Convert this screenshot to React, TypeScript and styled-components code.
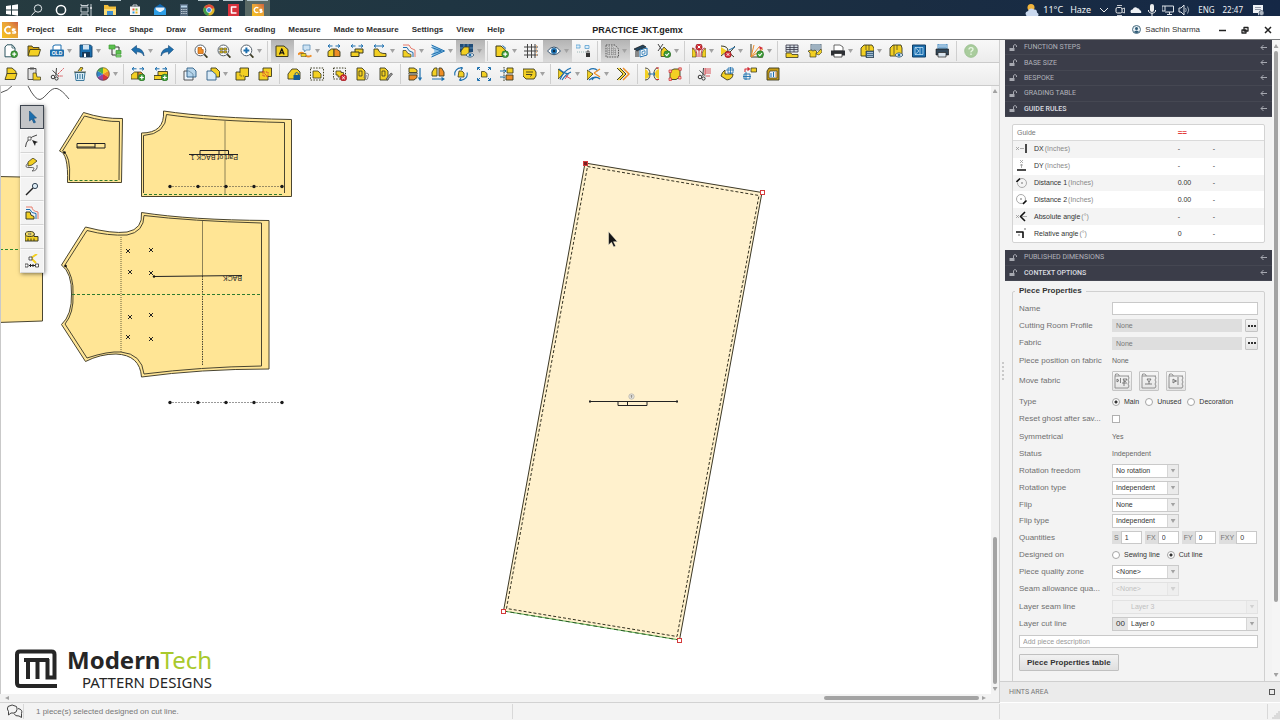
import React, { ReactNode } from "react";
import styled, { createGlobalStyle, css } from "styled-components";

const Y = "#f3d023";
const K = "#3b3a22";
const B = "#1c6fae";
const L = "#8cc0e4";
const O = "#ee8d25";
const R = "#d12c35";
const G = "#3f9c38";
const sans = `"Liberation Sans", Arial, sans-serif`;

const GlobalStyle = createGlobalStyle`
  * { box-sizing: border-box; }
  html, body, #root { height: 100%; }
  body { margin: 0; overflow: hidden; background: #f3f3f3; font: 8px/10px ${sans}; color: #333; }
  button, input, select { font: inherit; color: inherit; margin: 0; }
`;

/* ---------- icons ---------- */

const Svg = ({ children, size = 14, box = 14 }: { children: ReactNode; size?: number; box?: number }) => (
  <svg width={size} height={size} viewBox={`0 0 ${box} ${box}`} fill="none" strokeLinejoin="round" aria-hidden="true">
    {children}
  </svg>
);

const Plus = ({ x = 10.2, y = 10.2 }) => (
  <>
    <circle cx={x} cy={y} r="3.4" fill={G} stroke="#256b25" strokeWidth=".6" />
    <path d={`M${x - 2} ${y}h4M${x} ${y - 2}v4`} stroke="#fff" strokeWidth="1.2" />
  </>
);
const Check = ({ x = 10.2, y = 10.2 }) => (
  <>
    <circle cx={x} cy={y} r="3.4" fill={G} stroke="#256b25" strokeWidth=".6" />
    <path d={`M${x - 1.8} ${y}l1.4 1.4 2.2-2.6`} stroke="#fff" strokeWidth="1.1" />
  </>
);
const Cross = ({ x = 10.2, y = 10.2 }) => (
  <>
    <circle cx={x} cy={y} r="3.2" fill={R} stroke="#8f1a20" strokeWidth=".6" />
    <path d={`M${x - 1.3} ${y - 1.3}l2.6 2.6M${x + 1.3} ${y - 1.3}l-2.6 2.6`} stroke="#fff" strokeWidth="1" />
  </>
);
const Spread = ({ y = 2 }) => (
  <path d={`M1 ${y}h4.5M8.5 ${y}h4.5M3 ${y - 1.6}L1 ${y}l2 1.6M11 ${y - 1.6}l2 1.6-2 1.6`} stroke={B} strokeWidth="1" />
);
const Lens = ({ children }: { children: ReactNode }) => (
  <>
    <path d="M10 10l3.4 3.6" stroke={K} strokeWidth="1.8" />
    <circle cx="6.4" cy="6.4" r="5.4" fill="#fff" stroke="#55606a" strokeWidth="1" />
    {children}
  </>
);
const Eye = ({ x = 10, y = 11 }) => (
  <>
    <path d={`M${x - 4} ${y}q4-4.4 8 0q-4 4.4-8 0z`} fill="#fff" stroke="#1f4b70" strokeWidth=".8" />
    <circle cx={x} cy={y} r="1.5" fill={B} />
  </>
);
const Scissors = () => (
  <>
    <path d="M6.5 1l-.7 8M2.5 3.5l6 5.500" stroke="#444" strokeWidth="1" />
    <circle cx="3" cy="10" r="1.8" stroke="#333" strokeWidth="1" />
    <circle cx="6.500" cy="11.500" r="1.600" stroke="#333" strokeWidth="1" />
  </>
);

const icons: Record<string, ReactNode> = {
  new: <><path d="M3 .8h5.200L11 4v8.800H1V3z" fill="#fff" stroke="#2c5560" /><path d="M8 1v3h3" stroke="#2c5560" strokeWidth=".8" /><Plus /></>,
  open: <><path d="M1 11.500V2h4l1 1.500h6v2" fill="#d9a80f" stroke={K} strokeWidth=".9" /><path d="M3 5.500h10.500l-2 6.500H1z" fill={Y} stroke={K} strokeWidth=".9" /></>,
  old: <><path d="M3 6V2l2-1h6v5" fill="#fff" stroke={B} /><rect x="0" y="5.500" width="14" height="7" rx="1" fill={B} /><text x="7" y="11" textAnchor="middle" fontSize="5" fontWeight="700" fill="#fff" fontFamily="Liberation Sans">OLD</text></>,
  save: <><path d="M1 1h10.500L13 2.500V13H1z" fill={B} stroke="#123f66" strokeWidth=".9" /><path d="M4 1h6v4.500H4z" fill="#cfe3f2" /><path d="M3 8h8v5H3z" fill="#15395a" /><path d="M5 9.500h2V13H5z" fill="#fff" /></>,
  tree: <><path d="M4 5v6h5M7 3h4v4" stroke="#333" /><path d="M1 1h6v4H1zM8 6.500h5v3.500H8z" fill="#5cc04f" stroke={G} strokeWidth=".7" /><path d="M8 11h5v2H8z" fill="#8fdc84" stroke={G} strokeWidth=".7" /></>,
  undo: <path d="M.5 5.500L5.500 1.500v2.600q7 .4 7.500 7.900q-2-4.300-7.500-4.200v2.400z" fill={B} stroke="#164a78" strokeWidth=".6" />,
  redo: <path d="M13.500 5.500L8.500 1.500v2.600q-7 .4-7.500 7.900q2-4.300 7.500-4.200v2.400z" fill={B} stroke="#164a78" strokeWidth=".6" />,
  zoomPiece: <Lens><path d="M4 3.500h3.500v2h1.700v4H4z" fill={O} stroke="#b25a10" strokeWidth=".7" /></Lens>,
  zoomAll: <Lens><path d="M2.800 4h3v2h-3zM6.800 4h3v2h-3zM2.800 7h3v2h-3zM6.800 7h3v2h-3z" fill={Y} stroke={K} strokeWidth=".6" /></Lens>,
  zoomIn: <Lens><path d="M3.500 6.400h5.800M6.400 3.500v5.800" stroke={B} strokeWidth="2" /></Lens>,
  label: <><path d="M1 2h8l4 3.500V12.500H1z" fill={Y} stroke={K} /><path d="M4.500 10.500L6.800 4.700l2.300 5.800M5.300 8.800h3" stroke="#111" strokeWidth="1.200" /></>,
  note: <><path d="M5 1h7v5H8L6.500 8V6H5z" fill="#cde3f4" stroke="#5d8fb8" strokeWidth=".8" /><path d="M0 10.500q4-3.500 6.500 0t7 1" stroke={O} strokeWidth="2" /><path d="M3 9.500h5v3H3z" fill={Y} stroke={K} strokeWidth=".5" /></>,
  dartPair: <><Spread /><path d="M1 12.500V7.500l3.500-2.500H7v7.500z" fill={Y} stroke={K} strokeWidth=".9" /><path d="M7 12.500V5h2.500L13 7.500v5z" fill={O} stroke={K} strokeWidth=".9" /></>,
  dupSize: <><Spread /><path d="M5 5h8v4H5z" fill={Y} stroke={K} /><path d="M1 8h8v4.500H1z" fill={Y} stroke={K} /></>,
  cornerSize: <><path d="M1 2h9M3 .5L1 2l2 1.500M9 .5L11 2 9 3.500" stroke={B} /><path d="M1 5h4q1 5 8 4.500v3H1z" fill={Y} stroke={K} strokeWidth=".9" /></>,
  grade: <><path d="M1 1h6q1 4 6 5v7" stroke="#e77a6b" /><path d="M1 3.500h4q1 4 6 5V13" stroke={B} /><path d="M1 6.500h3q1 3.500 5 4V13H1z" fill={Y} stroke={K} strokeWidth=".7" /></>,
  fan: <><path d="M.5 1l13 6L.5 13l3-6z" fill={L} /><path d="M.5 1l13 6L.5 13M.5 3.500l10 3.500-10 3.500" stroke={B} strokeWidth="1" /></>,
  viewPiece: <><path d="M0 0h13v8H0z" fill="#204c77" /><path d="M4 0v8M8 0v8M0 4h13" stroke={L} strokeWidth=".6" /><path d="M1 7l3-4h5v8H1z" fill={Y} stroke={K} strokeWidth=".8" /><Eye /></>,
  addPiece: <><path d="M1 2h5l4.500 4v6.500H1z" fill={Y} stroke={K} /><path d="M7.500 1.500l3.500 3" stroke={B} /><Plus /></>,
  grid: <><path d="M3.500 0v14M7.500 0v14M11 0v14M0 3h14M0 7h14M0 11h14" stroke="#444" strokeWidth="1" /><path d="M12.500 1v12" stroke="#edb27a" strokeWidth=".8" strokeDasharray="2 1" /></>,
  eye: <><path d="M.5 7Q7-1 13.500 7Q7 14.500.500 7z" fill="#fff" stroke="#34516c" /><circle cx="7" cy="7" r="3" fill={B} /><circle cx="7" cy="7" r="1.200" fill="#10283e" /></>,
  link: <><path d="M0 1h4v3H0zM9 1.500h4v3H9z" fill="#dceefa" stroke="#5ca1d0" strokeWidth=".8" /><path d="M1 8h9" stroke="#8aa" strokeWidth=".8" strokeDasharray="1 1" /><path d="M10 9h4v4h-4z" fill="#333" /><path d="M11 9V7h2v2" stroke="#333" strokeWidth=".8" /></>,
  hatch: <><path d="M1 1h9l3.500 4v8H1z" fill="#ccc" stroke="#555" strokeDasharray="1.500 1" /><path d="M2 4h8M2 6h10M2 8h10M2 10h10M4 2v10M7 2v10M10 4v8" stroke="#666" strokeWidth=".7" strokeDasharray="1 1" /></>,
  plotter: <><path d="M0 5l9-4 3 2-9 4z" fill="#24465f" stroke="#111" strokeWidth=".7" /><path d="M2 7v6M4 7v6" stroke="#222" /><path d="M6 6l7-2v7l-7 2z" fill="#fff" stroke={B} /><path d="M8 7.500l3-.8v3l-3 .8z" stroke={B} strokeWidth=".8" /></>,
  cutCheck: <><path d="M1 0l5 8M6 0L1 7" stroke="#444" /><path d="M4 12.500V7l3-4 6 6v3.500z" fill={Y} stroke={K} strokeWidth=".8" /><Check /></>,
  notchDel: <><path d="M0 4q5 0 5 9M13 4q-4 0-4 9M7 6v7" stroke={R} strokeWidth=".9" /><path d="M0 4.500q4 .5 4 8.500H0zM14 4.500q-4 .5-4 8.500h4z" fill={Y} stroke={K} strokeWidth=".6" /><Cross x={7} y={3} /></>,
  lineDel: <><path d="M0 2q7 0 7 5t7-5M0 12l6-5 7 6" stroke={K} strokeWidth="1" /><path d="M0 3l6 4-6 4z" fill={Y} /><path d="M14 3L8 6" stroke={B} /><Cross x={7} y={10.500} /></>,
  growthOk: <><path d="M1 0v13h12" stroke={K} /><path d="M1 13L4 1M1 13l8-10M1 13L13 5" stroke={O} strokeWidth="1" /><path d="M9 2l4 2-3 2" fill={R} /><Check /></>,
  sheet: <><path d="M1 1h12v7H1z" fill="#d5dde3" stroke="#334" strokeWidth=".8" /><path d="M1 3.500h12M1 5.500h12M5 1v7M9 1v7" stroke="#334" strokeWidth=".8" /><path d="M1 9h5l1 1.500h6v3H1z" fill={Y} stroke={K} strokeWidth=".8" /></>,
  shirt: <><path d="M3 0h10v6H3z" fill="#cfe3f2" stroke="#456" strokeWidth=".8" /><path d="M4 2h8M4 4h8" stroke="#456" strokeWidth=".7" /><path d="M0 7l3-1 2 1 2-1 2 2-1 1v4H2V9z" fill={Y} stroke={K} strokeWidth=".7" /><path d="M8 10l5-5 1 3-3 3z" fill={Y} stroke={K} strokeWidth=".6" /></>,
  print: <><path d="M3 1h6l3 2v4H3z" fill="#fff" stroke="#444" strokeWidth=".8" /><path d="M0 6.500h14v5H0z" fill="#2c2f33" /><path d="M3 9.500h8v3.500H3z" fill="#fff" stroke="#333" strokeWidth=".8" /></>,
  boxCalc: <><path d="M1 4l3-3h8l2 3v8H1z" fill={Y} stroke={K} strokeWidth=".9" /><path d="M6 1v5M9 1v5" stroke={K} strokeWidth=".7" /><path d="M6 7h8v6.500H6z" fill="#456c88" stroke="#234" strokeWidth=".7" /><path d="M7 8.500h6M7 10.500h6M7 12.500h6" stroke="#cde" strokeWidth=".7" /></>,
  boxEye: <><path d="M1 4l3-3h8l1 3v8H1z" fill={Y} stroke={K} strokeWidth=".9" /><path d="M5 1v10M8 1v5" stroke={K} strokeWidth=".7" /><Eye /></>,
  screen: <><path d="M.5 1h13v12H.500z" fill={B} stroke="#123f66" /><path d="M3 3.500h8v7H3zM3 3.500l4 3.500-4 3.500M8 3.500v7" stroke="#bfe0f6" strokeWidth=".8" /></>,
  printStack: <><path d="M3 0h9v5H3z" fill="#dcecf8" stroke={B} strokeWidth=".8" /><path d="M4 2h7M4 3.800h7" stroke={B} strokeWidth=".7" /><path d="M1 5h12.500v6H1z" fill="#33485a" stroke="#111" strokeWidth=".6" /><path d="M3 8.500h8v4.500H3z" fill="#d8e4ee" stroke="#222" strokeWidth=".7" /></>,
  help: <><circle cx="7" cy="7" r="6.400" fill="#a9cc9d" stroke="#8fb883" strokeWidth=".6" /><path d="M5 5.600q0-2 2-2t2 1.700q0 1-1.100 1.500T7 8.300M7 9.600v1.300" stroke="#e9f7e4" strokeWidth="1.300" /></>,

  pieceOpen: <><path d="M3 1h5l4 3.500v3H3z" fill={Y} stroke={K} strokeWidth=".9" /><path d="M1 12.500l2-6h10l-2 6z" fill={Y} stroke={K} strokeWidth=".9" /></>,
  paste: <><path d="M1 1.500h8v11H1z" fill="#e2e2e2" stroke="#444" strokeWidth=".9" /><path d="M3 .5h4v2H3z" fill="#555" /><path d="M6 6h3l1 4h3.500v3H6z" fill={Y} stroke={K} strokeWidth=".7" /></>,
  cut: <><Scissors /><path d="M8 7l6-6M8 9h5" stroke={R} strokeWidth=".9" strokeDasharray="1.500 .7" /></>,
  trash: <><path d="M2 5.500h10l-1 8H3z" fill="#d5e9f5" stroke="#2f6f94" strokeWidth=".9" /><path d="M4.500 7v5M7 7v5M9.500 7v5" stroke="#2f6f94" strokeWidth=".9" /><path d="M1 5h12M5 4l3-4 2 1-2 3" fill={Y} stroke={K} strokeWidth=".8" /></>,
  wheel: <><path d="M7 7V.500A6.500 6.500 0 0 1 12.600 3.700z" fill="#f6d51f" /><path d="M7 7l5.600-3.300a6.500 6.500 0 0 1 0 6.600z" fill={O} /><path d="M7 7l5.600 3.300A6.500 6.500 0 0 1 7 13.500z" fill="#d8343a" /><path d="M7 7v6.500a6.500 6.500 0 0 1-5.600-3.200z" fill="#9046a5" /><path d="M7 7l-5.600 3.300a6.500 6.500 0 0 1 0-6.600z" fill="#2d85c8" /><path d="M7 7L1.400 3.700A6.500 6.500 0 0 1 7 .500z" fill="#4fb04a" /><circle cx="7" cy="7" r="6.300" stroke="#444" strokeWidth=".6" /></>,
  dartAdd: <><Spread y={1.800} /><path d="M0 12V8l3.500-3H7v7z" fill={Y} stroke={K} strokeWidth=".8" /><path d="M7 12V5l3 0 3 3v4z" fill={O} stroke={K} strokeWidth=".8" /><Plus x={10.800} y={10.500} /></>,
  dupAdd: <><Spread y={1.800} /><path d="M4 4.500h9.500v5H4z" fill={Y} stroke={K} strokeWidth=".9" /><path d="M0 8.500h8v4H0z" fill={Y} stroke={K} strokeWidth=".9" /><Plus x={10.800} y={10.500} /></>,
  union: <><path d="M1 4h5l4 3v6H1z" fill="#eaf3fb" stroke="#444" strokeWidth=".9" /><path d="M4 1h6l3 3v6H4z" fill={L} fillOpacity=".6" stroke="#2d5d86" strokeWidth=".9" /></>,
  subtract: <><path d="M5 1h5l3.500 3.500V10H5z" fill={Y} stroke={K} strokeWidth=".9" /><path d="M1 4h5l4 3.500V13H1z" fill="#d9eaf7" stroke="#2d5d86" strokeWidth=".9" /></>,
  merge: <><path d="M5 1h8.500v8.500H10V13H1V5h4z" fill={Y} stroke={K} strokeWidth=".9" /><path d="M5 5v4h5" stroke={K} strokeWidth=".8" strokeDasharray="1.300 1" /></>,
  mergeRed: <><path d="M5 1h8.500v8.500H10V13H1V5h4z" fill={Y} stroke={K} strokeWidth=".9" /><path d="M4 4l6 6M5 9V5h5v4z" stroke={R} strokeWidth=".9" strokeDasharray="1.300 1" /></>,
  lockPiece: <><path d="M1 7l4-5h5l3 3v7H1z" fill={Y} stroke={K} strokeWidth=".9" /><path d="M6.500 8h6.500v5H6.500z" fill="#175a92" /><path d="M8 8V6.500q1.700-2 3.400 0V8" stroke="#175a92" strokeWidth="1" /></>,
  selPiece: <><path d="M.5 1h13v12H.500z" stroke={K} strokeDasharray="1.500 1.300" /><path d="M3 4h5l3 3v4H3z" fill={Y} stroke={K} strokeWidth=".8" /></>,
  selDel: <><path d="M.5 1h12v11H.500z" stroke={K} strokeDasharray="1.500 1.300" /><path d="M3 4h5v1.500h2.500V10H5V8H3z" fill={Y} stroke={K} strokeWidth=".8" /><Cross x={10.500} y={10.800} /></>,
  clip: <><path d="M1 1h5l3 3v9H1z" fill={Y} stroke={K} strokeWidth=".9" /><path d="M3 4h3v5H3z" stroke={K} strokeWidth=".8" /><path d="M8 11l1-4q2-2 3.500 0l-1 5q-1.500 1.500-2 0l.8-4" stroke="#777" strokeWidth=".9" /></>,
  clipEdit: <><path d="M1 1h5l3 3v9H1z" fill={Y} stroke={K} strokeWidth=".9" /><path d="M3 4h3v5H3z" stroke={K} strokeWidth=".8" /><path d="M7 12l5-6 1.500 1-5 6z" fill="#999" stroke="#444" strokeWidth=".7" /></>,
  flipV: <><path d="M1 1h5l3 2v2.500H1z" fill={Y} stroke={K} strokeWidth=".9" /><path d="M1 8h8v2.500L6 13H1z" fill={O} stroke={K} strokeWidth=".9" /><path d="M0 6.800h10" stroke={K} strokeWidth=".8" /><path d="M12 1v11M10.500 10.500L12 13l1.500-2.500" stroke={B} strokeWidth="1.200" /></>,
  flipH: <><path d="M1 9V5l2.500-4H6v8z" fill={Y} stroke={K} strokeWidth=".9" /><path d="M8 9V1h2.500L13 5v4z" fill={O} stroke={K} strokeWidth=".9" /><path d="M1 12h11M10.500 10.500L13 12l-2.500 1.500" stroke={B} strokeWidth="1.200" /></>,
  rotate: <><path d="M5 4h3l2 2v4H4z" fill={Y} stroke={K} strokeWidth=".8" /><path d="M1 8.500A6 6 0 0 1 8 1M13 5.500A6 6 0 0 1 6 13M6.500 0L8.500 1 7 2.800M7.500 14L5.500 13 7 11.200" stroke={B} strokeWidth="1.100" /></>,
  scale: <><path d="M4.500 4.500h3l2.500 2v3.500H4.500z" fill={Y} stroke={K} strokeWidth=".8" /><path d="M3 3L.800.800M11 3l2.200-2.200M3 11L.800 13.200M11 11l2.200 2.200M.500 3V.500H3M11 .500h2.500V3M.500 11v2.500H3M11 13.500h2.500V11" stroke={B} /></>,
  align: <><path d="M7 1h6v5H7z" fill={Y} stroke={K} strokeWidth=".9" /><path d="M6 8h7v5H6z" fill={O} stroke={K} strokeWidth=".9" /><path d="M4 0v14" stroke={K} strokeDasharray="1.500 1" /><path d="M0 4h6M4.500 2.500L6 4 4.500 5.500M0 10h5" stroke={B} /></>,
  tag: <><path d="M0 2h11l2 3v4l-2 3H3L0 9z" fill={Y} stroke={K} strokeWidth=".9" /><path d="M3 5h7M3 7.500h6l-1.500 2" stroke={K} strokeWidth=".9" /></>,
  seamA: <><path d="M0 2l6 4.500L0 12z" fill={Y} stroke={K} strokeWidth=".8" /><path d="M2 12.500Q6 3 13 1M4 13Q8 7 13 5M1 2q4 4 10 5" stroke={B} strokeWidth="1.200" /><path d="M8 9l5 3M10 8l-3 4" stroke={R} strokeWidth=".8" /></>,
  seamB: <><path d="M0 3l6 4-6 6z" fill={Y} stroke={K} strokeWidth=".8" /><path d="M2 3q5-3 9 1M2 13Q8 8 13 12M5 13q2-4 7-2" stroke={B} strokeWidth="1.200" /><path d="M7 6l6-4M7 6l6 4" stroke={O} strokeWidth="1.200" /></>,
  chevrons: <><path d="M1 1l6 6-6 6M4 1l6 6-6 6" stroke={K} strokeWidth="1" /><path d="M7 1l6 6-6 6" stroke={O} strokeWidth="1.500" /><path d="M2.500 1l6 6-6 6" stroke={Y} strokeWidth="1.200" /></>,
  swap: <><path d="M0 2q3 1 4 5t-4 5z" fill={Y} /><path d="M14 2q-4 1-4 5t4 5z" fill={Y} /><path d="M0 1q5 0 5 6t-5 6M13 1Q9 1 9 7t4 6" stroke={K} strokeWidth=".9" /><path d="M3 7h7M8.500 5.500L10 7 8.500 8.500" stroke={B} /><path d="M11 1h3M11 12.500h3" stroke={R} /></>,
  nodes: <><path d="M2 4l4-2 6 0 0 8-4 2.500H2z" fill={Y} stroke={K} strokeWidth=".9" /><path d="M1 3h2.500v2.500H1zM10.800.800h2.500v2.500h-2.500zM1 11h2.500v2.500H1zM10.500 9.500H13V12h-2.500z" fill="#f3c0b0" stroke={R} strokeWidth=".7" /></>,
  cutSeam: <><Scissors /><path d="M8 2h6M8 4h6M8 6h6M9 9h4M8 1v7" stroke={R} strokeWidth=".8" /></>,
  hand: <><path d="M1 9q1-4 4-6v4h8q0 5-6 6z" fill={Y} stroke={K} strokeWidth=".9" /><path d="M8 1h5v5H8zM6 3h8M10.500 0v7" stroke={B} strokeWidth=".8" /></>,
  transfer: <><path d="M8 1h5.500v4H8z" fill={Y} stroke={K} strokeWidth=".8" /><path d="M1 7h6v5H1zM3 5v8M0 9.500h8" stroke={B} strokeWidth=".9" /><path d="M2 5V2h4M4.500.500L6.500 2 4.500 3.500" stroke={R} strokeWidth="1.100" /></>,
  page: <><path d="M3 1h10v12H1V4z" fill="#c79b12" stroke={K} strokeWidth=".9" /><path d="M4 4h7v7H3V6z" fill="#e9f2f8" stroke={K} strokeWidth=".7" /><path d="M5 6v4M7.500 5v5" stroke={B} /><path d="M10 5v5" stroke={O} /></>,
};

const paletteIcons: { name: string; art: ReactNode }[] = [
  { name: "Select", art: <path d="M4.500 1l7 7-3 .3 2 4-1.700.7-1.800-4L4.500 11z" fill={B} stroke="#144a78" strokeWidth=".6" /> },
  { name: "Edit point", art: <><path d="M.5 13Q1 4 12 1" stroke="#444" /><path d="M3 3h3v3H3z" fill="#fff" stroke="#444" strokeWidth=".8" /><path d="M7 6l6 2-2.300 1L10 12z" fill="#222" /></> },
  { name: "Draw", art: <><path d="M3 4l5-4 4 3-5 4-4 1z" fill={Y} stroke={K} strokeWidth=".8" /><path d="M3 5Q-2 10 5 9.500T7 13q6 0 5-6" stroke="#666" /></> },
  { name: "Pin", art: <><circle cx="10" cy="4" r="2.600" fill="#dcebf4" stroke="#345" /><path d="M8 6L1 13" stroke="#222" strokeWidth="1.400" /></> },
  { name: "Seam", art: <><path d="M1 1h6q0 4 6 5v7" stroke="#e77a6b" /><path d="M1 3.500h4q1 4 6 4V13" stroke={B} /><path d="M1 6h4q0 4 4 4.500V13H1z" fill={Y} stroke={K} /></> },
  { name: "Measure", art: <><path d="M0 4v7h13V6.500H9V4z" fill={Y} stroke={K} /><ellipse cx="4.800" cy="4" rx="4.500" ry="2.500" fill="#f7e06a" stroke={K} /><ellipse cx="4.800" cy="4" rx="1.500" ry=".8" fill="#fff" stroke={K} strokeWidth=".6" /><path d="M3 11V8.500M6 11V8.500M9 11V8.500" stroke={K} /></> },
  { name: "Assemble", art: <><path d="M12 0L6 4l5 5" stroke={Y} strokeWidth="2" /><path d="M4 3h3v3H4zM0 10h3v3H0zM10.500 10h3v3h-3z" fill="#fff" stroke="#333" strokeWidth=".8" /><path d="M4 11.500h6M5.500 10v3M8 10v3" stroke="#222" /></> },
];

/* ---------- shell ---------- */

const Shell = styled.div`
  display: flex;
  flex-direction: column;
  height: 100vh;
`;

const Taskbar = styled.header`
  display: flex;
  justify-content: space-between;
  flex: none;
  height: 16px;
  overflow: hidden;
  padding-right: 16px;
  color: #eef2f5;
  background: linear-gradient(90deg, #263b40, #1f3542 35%, #1a2d42 70%, #152846);
`;

const TaskApps = styled.div`
  display: grid;
  grid-template-columns: repeat(11, 1fr);
  width: 270px;
`;

const TaskApp = styled.button<{ $open?: boolean; $active?: boolean }>`
  display: flex;
  justify-content: center;
  padding: 3px 0 0;
  border: 0;
  border-top: 1px solid transparent;
  background: ${(p) => (p.$active ? "#5a6a66" : "transparent")};
  ${(p) => p.$open && css`border-image: linear-gradient(90deg, transparent 12%, #b8cbd2 12% 88%, transparent 88%) 1;`}
`;

const Tray = styled.div`
  display: flex;
  align-items: flex-start;
  gap: 4px;
  padding-top: 4px;
  font: 8px/12px "Noto Sans", "Open Sans", sans-serif;
`;

const Weather = styled.span`
  display: flex;
  gap: 7px;
  margin-right: 3px;
  font-size: 9px;
`;

const Language = styled.span`
  margin-left: 4px;
`;

const Clock = styled.time`
  margin: 0 5px 0 4px;
`;

const MenuBar = styled.nav`
  display: grid;
  grid-template-columns: 1fr auto 1fr;
  align-items: center;
  flex: none;
  height: 24px;
  padding: 4px 7px 0 2px;
  background: #fff;
  border-bottom: 1px solid #77797b;
`;

const Menus = styled.div`
  display: flex;
  align-items: center;
  gap: 13px;
  font-weight: 700;

  svg { margin-right: -4px; }
`;

const MenuItem = styled.button`
  border: 0;
  padding: 0;
  background: none;
  color: #2e2e2e;
  white-space: nowrap;
`;

const Title = styled.h1`
  margin: 0;
  font-size: 9px;
  color: #222;
`;

const WindowArea = styled.div`
  display: flex;
  justify-content: flex-end;
  align-items: center;
  gap: 13px;
`;

const User = styled.span`
  display: flex;
  align-items: center;
  gap: 4px;
  margin-right: 4px;
`;

const WindowButton = styled.button`
  display: flex;
  padding: 0;
  border: 0;
  background: none;
`;

const Main = styled.div`
  display: flex;
  flex: 1;
  min-height: 0;
`;

const Workspace = styled.main`
  display: flex;
  flex-direction: column;
  flex: 1;
  min-width: 0;
  border-right: 1px solid #cfcfcf;
`;

/* ---------- toolbars ---------- */

const ToolRow = styled.div`
  display: flex;
  flex: none;
  height: 23px;
  overflow: hidden;
  background: linear-gradient(#f8f8f8, #ececec);
  border-bottom: 1px solid #cbcbcb;
`;

const ToolButton = styled.button<{ $menu?: boolean; $active?: boolean }>`
  display: flex;
  align-items: center;
  flex: none;
  width: ${(p) => (p.$menu ? 29 : 23)}px;
  gap: 3px;
  padding: 0 0 0 4px;
  border: 0;
  background: ${(p) => (p.$active ? "linear-gradient(#b4b4b4, #dadada)" : "none")};
`;

const Caret = styled.span<{ $dir?: "up" | "down" | "left" | "right" }>`
  flex: none;
  width: 5px;
  height: 4px;
  background: #a2a2a2;
  clip-path: ${(p) =>
    ({
      down: "polygon(0 0, 100% 0, 50% 100%)",
      up: "polygon(50% 0, 100% 100%, 0 100%)",
      left: "polygon(100% 0, 100% 100%, 20% 50%)",
      right: "polygon(0 0, 80% 50%, 0 100%)",
    })[p.$dir ?? "down"]};
`;

const Divider = styled.span`
  flex: none;
  width: 1px;
  margin: 1px 3px 1px 2px;
  background: #cfcfcf;
`;

/* name, "+" for a menu arrow, "*" for pressed, "|" for a divider, "_" for spare room */
const rowOne =
  "new open old+ save+ tree undo+ redo _ | zoomPiece zoomAll zoomIn+ | label* note+ dartPair dupSize cornerSize+ grade+ fan+ viewPiece+* | addPiece+ grid eye+* link | hatch+* plotter cutCheck+ | notchDel+ lineDel+ growthOk+ | sheet shirt print+ boxCalc+ boxEye screen printStack | help";
const rowTwo =
  "pieceOpen paste cut trash wheel+ | dartAdd dupAdd | union subtract+ merge mergeRed | lockPiece selPiece selDel clip clipEdit | flipV flipH rotate scale align tag+ | seamA+ seamB+ chevrons | swap nodes | cutSeam hand transfer page";

const Spare = styled.span`
  flex: none;
  width: 5px;
`;

const Tools = ({ spec }: { spec: string }) => (
  <ToolRow role="toolbar">
    {spec.split(" ").map((token, i) => {
      if (token === "|") return <Divider key={i} />;
      if (token === "_") return <Spare key={i} />;
      const name = token.replace(/[+*]/g, "");
      const menu = token.includes("+");
      return (
        <ToolButton key={i} $menu={menu} $active={token.includes("*")} aria-label={name}>
          <Svg>{icons[name]}</Svg>
          {menu && <Caret />}
        </ToolButton>
      );
    })}
  </ToolRow>
);

/* ---------- canvas ---------- */

const CanvasGrid = styled.section`
  display: grid;
  grid-template: minmax(0, 1fr) 8px / minmax(0, 1fr) 8px;
  flex: 1;
  min-height: 0;
  border-bottom: 1px solid #d2d2d2;
`;

const Canvas = styled.div`
  position: relative;
  overflow: hidden;
  background: #fff;
  border-left: 1px solid #c9c9c9;
`;

const Drawing = styled.svg`
  display: block;
  width: 100%;
  height: 100%;
`;

const Palette = styled.div`
  position: absolute;
  left: 19px;
  top: 19px;
  width: 24px;
  background: #f5f5f5;
  box-shadow: 1px 1px 4px rgba(0, 0, 0, 0.5);
`;

const PaletteButton = styled.button<{ $active?: boolean }>`
  display: flex;
  align-items: center;
  justify-content: center;
  width: 24px;
  height: 24px;
  padding: 0;
  border: 1px solid ${(p) => (p.$active ? "#3e4650" : "#fafafa")};
  border-bottom-color: ${(p) => (p.$active ? "#3e4650" : "#d5d5d5")};
  background: ${(p) => (p.$active ? "#c3c5c8" : "#f3f3f3")};
`;

const Brand = styled.div`
  position: absolute;
  left: 13px;
  bottom: 2px;
  display: flex;
  align-items: center;
  gap: 10px;
  color: #262626;
  font-family: "Noto Sans", "Open Sans", sans-serif;
`;

const BrandText = styled.div`
  text-align: right;
  font-size: 15px;
  line-height: 19px;
`;

const BrandName = styled.div`
  font-size: 24px;
  line-height: 27px;
`;

const Green = styled.span`
  color: #a9c92c;
`;

const VScroll = styled.div`
  display: flex;
  flex-direction: column;
  justify-content: space-between;
  align-items: center;
  padding: 3px 0;
  background: #f2f2f2;
`;

const HScroll = styled.div`
  grid-column: 1 / -1;
  display: flex;
  align-items: center;
  gap: 3px;
  padding: 0 12px 0 4px;
  background: #f2f2f2;
`;

const HTrack = styled.div`
  display: flex;
  justify-content: flex-end;
  flex: 1;
`;

const Thumb = styled.span<{ $w: string; $h: string }>`
  width: ${(p) => p.$w};
  height: ${(p) => p.$h};
  border-radius: 2px;
  background: #a3a3a3;
`;

const Column = styled.div<{ $end?: boolean }>`
  display: flex;
  flex-direction: column;
  justify-content: ${(p) => (p.$end ? "flex-end" : "flex-start")};
  flex: 1;
  padding: 3px 0;
`;

const DotRow = ({ y }: { y: number }) => (
  <>
    <path d={`M169.500 ${y + 0.5}H282`} stroke="#333" strokeDasharray="1 2" />
    {[170, 198, 226, 254, 282].map((x) => (
      <circle key={x} cx={x} cy={y + 0.5} r="1.700" fill="#1a1a1a" stroke="none" />
    ))}
  </>
);

const marks = [[128, 251], [151, 250], [130, 272], [151, 273], [130, 317], [151, 315], [128, 337], [151, 339]];
const corners = [[585, 163], [762, 192], [679, 640], [503, 611]];

const backOuter =
  "M85.500 227Q112 234 127 232Q143 229 141.500 212.500Q190 220 269 220.500V369Q200 369 141.500 377Q140 355 116 354Q100 354 85.500 361.500L61.500 324.500Q72 315 71.500 294Q72 273 61.500 265Z";
const backInner =
  "M261.500 223Q190 221 144 215.500Q144 232 127 235Q108 236 87 230.500L65 265Q74 277 73 294Q74 313 65 324L87 358Q108 351 121 352Q142 354 144 374Q200 367 261.500 366Z";

const Pattern = () => (
  <Drawing role="img" aria-label="Pattern pieces">
    <g transform="translate(-1 -86)" fill="none" stroke="#4a4530" strokeWidth="1">
      <path d="M0 93Q8 91 13 85M28 86Q35 100 40 99.500C46 98 50 87 57 88.500Q62 90 69 99" stroke="#555" />

      <path d="M-2 176.500L42.500 177.500V321L-2 322.500Z" fill="#ffe595" />
      <path d="M0 249.500H42" stroke="#2f8a2f" strokeDasharray="3 2" />

      <path d="M83.500 112.500Q103 119 122.500 118.500L121.500 182.500H67.500Q68.500 153 59.500 151Z" fill="#ffe595" />
      <path d="M84.500 116Q105 122 119.500 121.500L119 180M69.500 180Q71 155 62.500 151L84.500 116" />
      <path d="M69.500 180.500H119" stroke="#2f7a2f" strokeDasharray="3 2" />
      <path d="M77 143.500h28v4.500H77zM95 143.500v4.500M77 147h18" stroke="#222" />
      <circle cx="64.500" cy="152.500" r="1.300" fill="#111" stroke="none" />

      <path d="M163.500 111Q210 118 291.500 119.500V196.500H141.500V133Q165 133 163.500 111Z" fill="#ffe595" />
      <path d="M284.500 193V122.500Q210 121 166.500 114.500Q166 134 143.500 135.500V193" />
      <path d="M144 194.500H284" stroke="#2f7a2f" strokeDasharray="3 2" />
      <path d="M225 121V194" stroke="#8d8257" />
      <path d="M200 150.500h28.500v4H200zM219 150.500v4M189 154.500h49" stroke="#222" />
      <DotRow y={186} />

      <path d={backOuter} fill="#ffe595" />
      <path d={backInner} />
      <path d="M121 237V352" stroke="#6b6340" strokeDasharray="1 1" />
      <path d="M202.500 221V276" stroke="#8d8257" />
      <path d="M202.500 276V366" stroke="#4a4530" strokeDasharray="1.500 1" />
      <path d="M72 294.500H261" stroke="#2f7a2f" strokeDasharray="3 2" />
      <path d="M154 276.500L242 275.500" stroke="#222" />
      <circle cx="154" cy="276.500" r="1.200" fill="#111" stroke="none" />
      <circle cx="65.500" cy="266" r="1.300" fill="#111" stroke="none" />
      {marks.map(([x, y]) => (
        <path key={`${x}-${y}`} d={`M${x - 2} ${y - 2}l4 4M${x + 2} ${y - 2}l-4 4`} stroke="#222" />
      ))}
      <DotRow y={402} />

      <path d="M585 163L762 192.500L679.500 640L503.500 611Z" fill="#fff1cd" stroke="none" />
      <path d="M503.500 611L585 163L762 192.500L679.500 640" stroke="#3c3826" />
      <path d="M503.500 611L679.500 640" stroke="#63b35a" />
      <path d="M503.500 611L679.500 640" stroke="#2c5a28" strokeDasharray="4 3" />
      <path d="M587.500 166.500L759 195.500L677 636.500L506.500 608.500Z" stroke="#33301f" strokeDasharray="3 2" />
      {corners.map(([x, y], i) => (
        <rect key={x} x={x - 1.5} y={y - 1.5} width="4" height="4" fill={i ? "#fff" : "#7b2020"} stroke="#d43c3c" />
      ))}
      <path d="M590 401.500H677M618 401.500v4h29v-4M627.500 401.500v4" stroke="#222" />
      <path d="M589 401.500h2M676 401.500h2" stroke="#222" strokeWidth="2" />
      <circle cx="631.500" cy="396.500" r="2.700" fill="#e4e2dd" stroke="#b9b6ac" strokeWidth=".8" />
      <path d="M630.500 396h2M631.500 395v3" stroke="#77756c" strokeWidth=".6" />

      <path d="M608.500 231.500v13.500l3-2.700 2.200 4.700 2-1-2.200-4.300h4z" fill="#161616" stroke="#fff8e4" strokeWidth=".5" />
    </g>
    <g fontFamily="Liberation Sans" fontSize="7" fill="#222">
      <text transform="translate(237 69) rotate(180)">Part of BACK 1</text>
      <text transform="translate(241 190) rotate(180)">BACK</text>
    </g>
  </Drawing>
);

/* ---------- side panel ---------- */

const Side = styled.aside`
  display: flex;
  flex-direction: column;
  flex: none;
  width: 280px;
`;

const SideTop = styled.div`
  display: flex;
  flex: 1;
  min-height: 0;
`;

const Splitter = styled.div`
  display: flex;
  align-items: center;
  width: 5px;
  padding-left: 2px;

  &::before {
    content: "";
    width: 2px;
    height: 18px;
    margin-top: 20px;
    background: repeating-linear-gradient(#c9c9c9 0 2px, transparent 2px 4px);
  }
`;

const SideScroll = styled.div`
  flex: 1;
  min-width: 0;
  overflow: hidden;
`;

const Accordion = styled.div<{ $h: number }>`
  display: grid;
  grid-auto-rows: 1fr;
  height: ${(p) => p.$h}px;
  background: #3b3d49;
`;

const AccordionHead = styled.button<{ $on?: boolean }>`
  display: flex;
  align-items: center;
  gap: 6px;
  padding: 0 5px 0 4px;
  border: 0;
  border-bottom: 1px solid #454752;
  background: none;
  color: ${(p) => (p.$on ? "#dcdde1" : "#b1b3ba")};
  font: ${(p) => (p.$on ? 500 : 400)} 7px/10px Roboto, sans-serif;

  span { flex: 1; text-align: left; }
`;

const Head = ({ children, on }: { children: ReactNode; on?: boolean }) => (
  <AccordionHead $on={on}>
    <Svg size={9} box={9}>
      <path d="M.5 5h5v3h-5z" fill="#a7a9b1" />
      <path d="M4.500 5V2.500q1.500-2 3 0V4" stroke="#a7a9b1" />
    </Svg>
    <span>{children}</span>
    <Svg size={7} box={7}>
      <path d="M7 3.500H1M3.500 1L1 3.500 3.500 6" stroke="#a7a9b1" />
    </Svg>
  </AccordionHead>
);

const GuideTable = styled.table`
  width: calc(100% - 14px);
  height: 119px;
  margin: 7px;
  border: 1px solid #d3d3d3;
  border-radius: 2px;
  border-spacing: 0;
  background: #fff;
  font-size: 7px;
  table-layout: fixed;

  th, td { height: 16px; padding: 0 4px; text-align: left; font-weight: 400; line-height: 10px; }
  thead th { color: #777; border-bottom: 1px solid #dadada; }
  tbody tr:nth-child(odd) { background: #f4f4f4; }
  tbody th { padding-left: 3px; }
`;

const RuleName = styled.span`
  display: flex;
  align-items: center;
  gap: 6px;
  white-space: nowrap;
`;

const Unit = styled.span`
  margin-left: 1px;
  color: #8a8a8a;
`;

const Marked = styled.span`
  color: #e23b3b;
  font-size: 8px;
  font-weight: 700;
`;

const Properties = styled.fieldset`
  min-width: 0;
  margin: 5px 7px 0;
  padding: 4px 6px 0;
  border: 1px solid #d0d0d0;
  border-radius: 2px;
`;

const Legend = styled.legend`
  margin-left: -4px;
  padding: 0 4px;
  font-weight: 700;
`;

const Row = styled.div<{ $h?: number; $full?: boolean }>`
  display: grid;
  grid-template-columns: ${(p) => (p.$full ? "minmax(0, 1fr)" : "87px minmax(0, 1fr)")};
  column-gap: 6px;
  align-items: center;
  height: ${(p) => p.$h ?? 17}px;
`;

const Label = styled.label`
  white-space: nowrap;
  color: #707070;
`;

const Flow = styled.div<{ $gap: number }>`
  display: flex;
  align-items: center;
  gap: ${(p) => p.$gap}px;
  font-size: 7px;
`;

const Value = styled.output`
  font-size: 7px;
  color: #666;
`;

const TextBox = styled.input<{ $flat?: boolean }>`
  flex: 1;
  width: 100%;
  min-width: 0;
  height: 13px;
  padding: 0 3px;
  border: 1px solid ${(p) => (p.$flat ? "#dedede" : "#c9c9c9")};
  border-radius: 0;
  background: ${(p) => (p.$flat ? "#dedede" : "#fff")};
  color: ${(p) => (p.$flat ? "#777" : "#333")};
  font-size: 7px;

  &::placeholder { color: #999; opacity: 1; }
`;

const SmallButton = styled.button<{ $size: number }>`
  display: flex;
  align-items: center;
  justify-content: center;
  flex: none;
  width: ${(p) => p.$size}px;
  height: ${(p) => p.$size}px;
  padding: 0;
  border: 1px solid #c4c4c4;
  border-radius: 1px;
  background: linear-gradient(#f6f6f6, #e4e4e4);
`;

const SelectFrame = styled.div<{ $wide?: boolean; $off?: boolean }>`
  display: grid;
  grid-template-columns: auto minmax(0, 1fr) 11px;
  align-items: center;
  width: ${(p) => (p.$wide ? "100%" : "67px")};
  height: 14px;
  border: 1px solid #cacaca;
  background: #fff;
  font-size: 7px;

  ${(p) => p.$off && css`
    border-color: #e2e2e2;
    background: #f1f1f1;
    color: #c6c6c6;
  `}
`;

const Prefix = styled.span<{ $blank?: boolean }>`
  width: 15px;
  height: 12px;
  font: 8px/12px ${sans};
  text-align: center;
  background: ${(p) => (p.$blank ? "transparent" : "#e4e4e4")};
`;

const Native = styled.select`
  grid-column: 2 / -1;
  grid-row: 1;
  width: 100%;
  height: 12px;
  padding: 0 0 0 3px;
  border: 0;
  appearance: none;
  background: none;
  opacity: 1;

  &:disabled { color: #c0c0c0; }
`;

const ArrowBox = styled.span<{ $off?: boolean }>`
  grid-column: 3;
  grid-row: 1;
  display: flex;
  align-items: center;
  justify-content: center;
  height: 12px;
  border-left: 1px solid #d6d6d6;
  background: #ebebeb;
  opacity: ${(p) => (p.$off ? 0.4 : 1)};
  pointer-events: none;
`;

const Radio = styled.input.attrs({ type: "radio" })`
  appearance: none;
  flex: none;
  width: 8px;
  height: 8px;
  border: 1px solid #a5a5a5;
  border-radius: 50%;
  background: #fff;

  &:checked { background: radial-gradient(#333 0 1px, #fff 2px); }
`;

const Tick = styled.input.attrs({ type: "checkbox" })`
  appearance: none;
  display: block;
  width: 8px;
  height: 8px;
  border: 1px solid #b0b0b0;
  background: #fff;
`;

const Choice = styled.label`
  display: flex;
  align-items: center;
  gap: 4px;
  white-space: nowrap;
`;

const Quantity = styled.label`
  display: flex;
  align-items: center;
  flex: none;
  height: 13px;
  padding-left: 2px;
  gap: 2px;
  background: #dedede;
  color: #777;

  input { flex: none; width: 21px; }
`;

const TableButton = styled.button`
  display: block;
  height: 17px;
  margin: 4px 0 8px;
  padding: 0 7px;
  border: 1px solid #c0c0c0;
  border-radius: 1px;
  background: linear-gradient(#f2f2f2, #dfdfdf);
  font-weight: 700;
`;

const SubHeading = styled.h2`
  margin: 0 0 0 7px;
  font-size: 8px;
  line-height: 10px;
`;

const SideBar = styled.div`
  display: flex;
  flex-direction: column;
  align-items: center;
  width: 8px;
  padding: 4px 0;
  background: #f5f5f5;
`;

const Hints = styled.div`
  display: flex;
  align-items: center;
  justify-content: space-between;
  flex: none;
  height: 22px;
  padding: 0 5px 0 9px;
  border-top: 1px solid #cfcfcf;
  border-bottom: 1px solid #fff;
  background: #ebebeb;
  color: #777;
  font: 7px/10px Roboto, sans-serif;
`;

const MaxBox = styled.span`
  width: 6px;
  height: 6px;
  border: 1px solid #555;
`;

const Status = styled.footer`
  display: grid;
  grid-template-columns: 24px 489px minmax(0, 1fr) 268px 12px;
  align-items: center;
  flex: none;
  height: 17px;
  background: #f3f3f3;
  color: #777;
`;

const StatusCell = styled.div`
  display: flex;
  align-items: center;
  justify-content: flex-end;
  height: 15px;
  border-right: 1px solid #d8d8d8;

  &:last-child { border: 0; align-items: flex-end; }
`;

const StatusText = styled(StatusCell)`
  justify-content: flex-start;
  padding-left: 12px;
`;

const Combo = ({ id, value, wide, off, prefix }: { id: string; value: string; wide?: boolean; off?: boolean; prefix?: string }) => (
  <SelectFrame $wide={wide} $off={off}>
    {prefix !== undefined && <Prefix $blank={!prefix}>{prefix}</Prefix>}
    <Native id={id} disabled={off} defaultValue={value}>
      <option>{value}</option>
    </Native>
    <ArrowBox $off={off}><Caret /></ArrowBox>
  </SelectFrame>
);

const Field = ({ id, label, h, children }: { id?: string; label: string; h?: number; children: ReactNode }) => (
  <Row $h={h}>
    <Label htmlFor={id}>{label}</Label>
    {children}
  </Row>
);

const Dots = () => (
  <Svg size={8} box={8}>
    <path d="M0 3h2v2H0zM3 3h2v2H3zM6 3h2v2H6z" fill="#333" />
  </Svg>
);

const moveArt = ["M4 7v3l2-1.500zM7.500 6v5M9 11h5M11 8v6M10 7h4l-2 3z", "M5 12h7M7 7h4l-2 3zM9 10v2", "M6 7v4l3-2zM11 5v8M7 9h3"];

const rules: { name: string; unit: string; a: string; art: ReactNode }[] = [
  { name: "DX", unit: "(Inches)", a: "-", art: <><path d="M0 4l3 3M3 4L0 7M4 5.500h4" stroke="#999" strokeWidth=".8" /><path d="M10 1v9" stroke="#111" strokeWidth="1.500" /></> },
  { name: "DY", unit: "(Inches)", a: "-", art: <><path d="M4 0l3 3M7 0L4 3M5.500 4v4M4 5h3" stroke="#999" strokeWidth=".8" /><path d="M1 10h9" stroke="#111" strokeWidth="1.500" /></> },
  { name: "Distance 1", unit: "(Inches)", a: "0.00", art: <><circle cx="6" cy="6" r="4.500" stroke="#aaa" strokeDasharray="14 4" /><path d="M5 5l2 2M7 5L5 7" stroke="#999" strokeWidth=".7" /><path d="M.5 5L4 1.500" stroke="#111" strokeWidth="1.600" /></> },
  { name: "Distance 2", unit: "(Inches)", a: "0.00", art: <><circle cx="5" cy="5" r="4.500" stroke="#aaa" /><path d="M4 4l2 2M6 4L4 6" stroke="#999" strokeWidth=".7" /><path d="M7 10l3.500-3.500" stroke="#111" strokeWidth="1.600" /></> },
  { name: "Absolute angle", unit: "(°)", a: "-", art: <><path d="M0 4l3 3M3 4L0 7M6 5.500h5" stroke="#999" strokeWidth=".8" /><path d="M9 1L4.500 5.500 9 10" stroke="#111" strokeWidth="1.600" /></> },
  { name: "Relative angle", unit: "(°)", a: "0", art: <><path d="M8 0l2 2M10 0L8 2M2 6l2 2M4 6L2 8" stroke="#999" strokeWidth=".7" /><path d="M0 4h7v6" stroke="#111" strokeWidth="1.600" /></> },
];

const NameCol = styled.col`
  width: 64%;
`;

const ValueCol = styled.col`
  width: 14%;
`;

const SidePanel = () => (
  <Side>
    <SideTop>
      <Splitter />
      <SideScroll>
        <Accordion $h={77}>
          <Head>FUNCTION STEPS</Head>
          <Head>BASE SIZE</Head>
          <Head>BESPOKE</Head>
          <Head>GRADING TABLE</Head>
          <Head on>GUIDE RULES</Head>
        </Accordion>
        <GuideTable>
          <colgroup>
            <NameCol />
            <ValueCol />
            <col />
          </colgroup>
          <thead>
            <tr>
              <th>Guide</th>
              <th><Marked>==</Marked></th>
              <th />
            </tr>
          </thead>
          <tbody>
            {rules.map((r) => (
              <tr key={r.name}>
                <th scope="row">
                  <RuleName>
                    <Svg size={12} box={12}>{r.art}</Svg>
                    <span>{r.name}<Unit>{r.unit}</Unit></span>
                  </RuleName>
                </th>
                <td>{r.a}</td>
                <td>-</td>
              </tr>
            ))}
          </tbody>
        </GuideTable>
        <Accordion $h={31}>
          <Head>PUBLISHED DIMENSIONS</Head>
          <Head on>CONTEXT OPTIONS</Head>
        </Accordion>
        <Properties>
          <Legend>Piece Properties</Legend>
          <Field id="name" label="Name"><TextBox id="name" /></Field>
          <Field id="profile" label="Cutting Room Profile">
            <Flow $gap={3}>
              <TextBox id="profile" $flat readOnly defaultValue="None" />
              <SmallButton $size={13} aria-label="Choose profile"><Dots /></SmallButton>
            </Flow>
          </Field>
          <Field id="fabric" label="Fabric" h={18}>
            <Flow $gap={3}>
              <TextBox id="fabric" $flat readOnly defaultValue="None" />
              <SmallButton $size={13} aria-label="Choose fabric"><Dots /></SmallButton>
            </Flow>
          </Field>
          <Field id="position" label="Piece position on fabric"><Value id="position">None</Value></Field>
          <Field label="Move fabric" h={24}>
            <Flow $gap={7}>
              {moveArt.map((d, i) => (
                <SmallButton key={d} $size={20} aria-label={`Move fabric ${i + 1}`}>
                  <Svg size={18} box={18}>
                    <path d="M2 16V4h14M2 4q0-3 2.500-2T6 4M2 16h13q2-2 0-4 2-2 0-4 2-2 0-4" stroke="#888" strokeWidth=".9" />
                    <path d={d} stroke="#666" strokeWidth=".8" />
                  </Svg>
                </SmallButton>
              ))}
            </Flow>
          </Field>
          <Field label="Type">
            <Flow $gap={6}>
              <Choice><Radio name="type" defaultChecked />Main</Choice>
              <Choice><Radio name="type" />Unused</Choice>
              <Choice><Radio name="type" />Decoration</Choice>
            </Flow>
          </Field>
          <Field id="ghost" label="Reset ghost after sav..." h={18}><Tick id="ghost" /></Field>
          <Field id="symmetrical" label="Symmetrical"><Value id="symmetrical">Yes</Value></Field>
          <Field id="status" label="Status"><Value id="status">Independent</Value></Field>
          <Field id="freedom" label="Rotation freedom"><Combo id="freedom" value="No rotation" /></Field>
          <Field id="rotation" label="Rotation type"><Combo id="rotation" value="Independent" /></Field>
          <Field id="flip" label="Flip"><Combo id="flip" value="None" /></Field>
          <Field id="fliptype" label="Flip type" h={16}><Combo id="fliptype" value="Independent" /></Field>
          <Field label="Quantities">
            <Flow $gap={3}>
              {[["S", "1"], ["FX", "0"], ["FY", "0"], ["FXY", "0"]].map(([name, count]) => (
                <Quantity key={name}>{name}<TextBox defaultValue={count} /></Quantity>
              ))}
            </Flow>
          </Field>
          <Field label="Designed on">
            <Flow $gap={7}>
              <Choice><Radio name="designed" />Sewing line</Choice>
              <Choice><Radio name="designed" defaultChecked />Cut line</Choice>
            </Flow>
          </Field>
          <Field id="zone" label="Piece quality zone"><Combo id="zone" value="<None>" /></Field>
          <Field id="seamzone" label="Seam allowance qua..." h={18}><Combo id="seamzone" value="<None>" off /></Field>
          <Field id="seamlayer" label="Layer seam line"><Combo id="seamlayer" value="Layer 3" wide off prefix="" /></Field>
          <Field id="cutlayer" label="Layer cut line"><Combo id="cutlayer" value="Layer 0" wide prefix="00" /></Field>
          <Row $h={18} $full><TextBox aria-label="Add piece description" placeholder="Add piece description" /></Row>
          <TableButton>Piece Properties table</TableButton>
          <SubHeading>Allow selection for WebCDS</SubHeading>
        </Properties>
      </SideScroll>
      <SideBar>
        <Caret $dir="up" />
        <Column><Thumb $w="4px" $h="89%" /></Column>
        <Caret />
      </SideBar>
    </SideTop>
    <Hints>
      HINTS AREA
      <MaxBox />
    </Hints>
  </Side>
);

/* ---------- taskbar art ---------- */

const taskApps: { name: string; open?: boolean; active?: boolean; art: ReactNode }[] = [
  { name: "Start", art: <path d="M0 2l5-.7v4.200H0zM6 1.200L12 .300v5.200H6zM0 6.500h5v4.200L0 10zM6 6.500h6v5.200l-6-.9z" fill="#fff" /> },
  { name: "Search", art: <><circle cx="7" cy="4.500" r="3.700" stroke="#e4e9ec" /><path d="M4.300 7.300L.500 11.500" stroke="#e4e9ec" /></> },
  { name: "Cortana", art: <circle cx="6" cy="6" r="4.600" stroke="#fff" strokeWidth="1.500" /> },
  { name: "Task view", art: <><path d="M1 3h7v5H1zM1 0v1.500h7V0M1 12v-2h7v2M11 0v3M11 5v7" stroke="#d9e0e4" strokeWidth=".9" /><circle cx="11" cy="4" r="1" fill="#fff" /></> },
  { name: "Files", open: true, art: <><path d="M0 1h4l1 1.500h7V11H0z" fill="#f3bf3a" /><path d="M0 5h12v6H0z" fill="#fbdc77" /><path d="M3 7h6v4H3z" fill="#3d8fd0" /></> },
  { name: "Store", art: <><path d="M1 2.500h10V11H1z" fill="#f5f5f5" /><path d="M4 2.500V1h4v1.500" stroke="#cfd6da" /><path d="M3.500 4.500h2v2h-2z" fill="#e5502c" /><path d="M6.500 4.500h2v2h-2z" fill="#7cb82f" /><path d="M3.500 7.500h2v2h-2z" fill="#2c9fe0" /><path d="M6.500 7.500h2v2h-2z" fill="#f5b91e" /></> },
  { name: "Mail", art: <><path d="M0 4l6-4 6 4v7H0z" fill="#1067b0" /><path d="M1.500 3.500h9V8h-9z" fill="#e8f3fb" /><path d="M0 4.500l6 4 6-4V11H0z" fill="#2d9ee6" /></> },
  { name: "Calculator", art: <><path d="M2 0h8v12H2z" fill="#53687c" /><path d="M3 1.500h6v2H3z" fill="#b8d4ea" /><path d="M3 5.500h6M3 7.500h6M3 9.500h6" stroke="#b8c6d0" strokeWidth="1" strokeDasharray="1.500 .7" /></> },
  { name: "Browser", open: true, art: <><circle cx="6" cy="6" r="5.600" fill="#e2b72b" /><path d="M6 6L1.200 3.200A5.600 5.600 0 0 1 11.200 4z" fill="#dd4b3a" /><path d="M6 6L1.200 3.200A5.600 5.600 0 0 0 5.500 11.600z" fill="#3d9f4e" /><circle cx="6" cy="6" r="2.500" fill="#3f7fe0" stroke="#fff" strokeWidth=".8" /></> },
  { name: "Recorder", open: true, art: <><path d="M1 0h11v12H1z" fill="#d7323c" /><path d="M9.500 3H4.500v6h5" stroke="#fff" strokeWidth="1.500" /></> },
];

const CsArt = () => (
  <>
    <defs>
      <linearGradient id="cs" x1="0" y1="1" x2="1" y2="0">
        <stop offset="0" stopColor="#f6c21d" />
        <stop offset=".6" stopColor="#e9a13a" />
        <stop offset="1" stopColor="#cf5f3e" />
      </linearGradient>
    </defs>
    <rect width="16" height="16" fill="url(#cs)" />
    <path d="M8.500 5.500A3.300 3.300 0 1 0 8.500 10.500M13.500 7.500q-3-1-3 .5 0 .8 1.500 1t1.500 1.200q-.3 1.300-3.300.5" stroke="#fff" strokeWidth="1.700" />
  </>
);

const trayArt: { name: string; art: ReactNode }[] = [
  { name: "More", art: <path d="M2 4l4 4 4-4" stroke="#eee" /> },
  { name: "Meet", art: <><rect x="2" y="3.500" width="6" height="5.500" rx="1.500" stroke="#eee" /><path d="M8 5l2.500-1v5L8 8M3 1.500h5M3 11.500h5" stroke="#eee" strokeWidth=".8" /></> },
  { name: "Cloud", art: <path d="M1 9q-1.500-3 1.500-3.500 2-3.500 5-1.300Q9.500 4.500 9.700 6 12 7 11 9z" fill="#eef1f5" /> },
  { name: "Microphone", art: <><rect x="4" y="0" width="4" height="8" rx="2" fill="#eee" /><path d="M2.500 6v1.500q3.500 3.500 7 0V6M6 9v3" stroke="#eee" /></> },
  { name: "Display", art: <><path d="M3 2h8.500v6H3M0 2h3v5H0zM5 10.500h5M7.500 8v2.500" stroke="#dfe4ea" /></> },
  { name: "Volume", art: <><path d="M1 4h2l3-3v10L3 8H1z" stroke="#dfe4ea" /><path d="M7.500 4q1.500 2 0 4M9.500 2.500q2.500 3.500 0 7" stroke="#aab4c0" strokeWidth=".9" /></> },
];

const menuNames = ["Project", "Edit", "Piece", "Shape", "Draw", "Garment", "Grading", "Measure", "Made to Measure", "Settings", "View", "Help"];

export default function App() {
  return (
    <Shell>
      <GlobalStyle />
      <Taskbar>
        <TaskApps>
          {taskApps.map((a) => (
            <TaskApp key={a.name} $open={a.open} aria-label={a.name}>
              <Svg size={12} box={12}>{a.art}</Svg>
            </TaskApp>
          ))}
          <TaskApp $open $active aria-label="Pattern editor">
            <Svg size={12} box={16}><CsArt /></Svg>
          </TaskApp>
        </TaskApps>
        <Tray>
          <Svg size={14} box={14}>
            <circle cx="6" cy="3.500" r="3.500" fill="#f2b53c" />
            <path d="M1.500 12Q-1 8 3 7q2-4 6-1.500Q12 5 12 8.500q2.500 1.500 1 3.500z" fill="#c9d8ee" />
          </Svg>
          <Weather><span>11°C</span><span>Haze</span></Weather>
          {trayArt.map((t) => <Svg key={t.name} size={12} box={12}>{t.art}</Svg>)}
          <Language>ENG</Language>
          <Clock>22:47</Clock>
          <Svg size={12} box={12}>
            <path d="M1 1h10v8H8l-2 2.500V9H1z" fill="#eef1f5" />
            <path d="M3 3.500h6M3 5.500h6" stroke="#7d8796" strokeWidth=".8" />
            <circle cx="9.500" cy="9" r="2.500" fill="#aeb6c2" stroke="#2a3a52" strokeWidth=".6" />
          </Svg>
        </Tray>
      </Taskbar>

      <MenuBar>
        <Menus>
          <Svg size={16} box={16}><CsArt /></Svg>
          {menuNames.map((m) => <MenuItem key={m}>{m}</MenuItem>)}
        </Menus>
        <Title>PRACTICE JKT.gemx</Title>
        <WindowArea>
          <User>
            <Svg size={9} box={9}>
              <circle cx="4.500" cy="4.500" r="4" fill="#e8f0f4" stroke="#4a6c80" />
              <circle cx="4.500" cy="3.400" r="1.500" fill="#2f5c78" />
              <path d="M1.800 7q2.700-3 5.400 0-2.700 2.200-5.400 0z" fill="#2f5c78" />
            </Svg>
            Sachin Sharma
          </User>
          <WindowButton aria-label="Minimize"><Svg size={10} box={10}><path d="M2 5.500h7" stroke="#222" strokeWidth="1.500" /></Svg></WindowButton>
          <WindowButton aria-label="Restore"><Svg size={10} box={10}><path d="M4 2.500h4V6H4zM2 5h4v3H2z" fill="#fff" stroke="#222" strokeWidth="1.300" /></Svg></WindowButton>
          <WindowButton aria-label="Close"><Svg size={10} box={10}><path d="M2 2l6 6M8 2L2 8" stroke="#222" strokeWidth="1.500" /></Svg></WindowButton>
        </WindowArea>
      </MenuBar>

      <Main>
        <Workspace>
          <Tools spec={rowOne} />
          <Tools spec={rowTwo} />
          <CanvasGrid>
            <Canvas>
              <Pattern />
              <Palette role="toolbar">
                {paletteIcons.map((p, i) => (
                  <PaletteButton key={p.name} $active={i === 0} aria-label={p.name}>
                    <Svg>{p.art}</Svg>
                  </PaletteButton>
                ))}
              </Palette>
              <Brand>
                <Svg size={43} box={43}>
                  <path d="M43 38H6Q3 38 3 35V6.500Q3 3.500 6 3.500H37.500Q40.500 3.500 40.500 6.500V29.500H33.500V11" stroke="#262626" strokeWidth="4" strokeLinejoin="miter" />
                  <path d="M10 12H35M14 10V31M23.500 10V31" stroke="#262626" strokeWidth="4" />
                </Svg>
                <BrandText>
                  <BrandName><b>Modern</b><Green>Tech</Green></BrandName>
                  PATTERN DESIGNS
                </BrandText>
              </Brand>
            </Canvas>
            <VScroll>
              <Caret $dir="up" />
              <Column $end><Thumb $w="4px" $h="25%" /></Column>
              <Caret />
            </VScroll>
            <HScroll>
              <Caret $dir="left" />
              <HTrack><Thumb $w="16%" $h="4px" /></HTrack>
              <Caret $dir="right" />
            </HScroll>
          </CanvasGrid>
        </Workspace>
        <SidePanel />
      </Main>

      <Status>
        <StatusCell>
          <Svg size={16} box={16}>
            <path d="M1 2.500Q5-.500 9.500 2.500 11 5 9 8 7 9.500 4 9L1.500 11V7.500Q-.500 5 1 2.500z" stroke="#444" />
            <path d="M11 4.500q5 1 3.500 5v4L12 12q-4 .5-5-2.500" stroke="#444" />
          </Svg>
        </StatusCell>
        <StatusText>1 piece(s) selected designed on cut line.</StatusText>
        <StatusCell />
        <StatusCell />
        <StatusCell>
          <Svg size={8} box={8}>
            <path d="M1 8V6M3 8V4M5 8V2M7 8V0" stroke="#c2c2c2" />
          </Svg>
        </StatusCell>
      </Status>
    </Shell>
  );
}
